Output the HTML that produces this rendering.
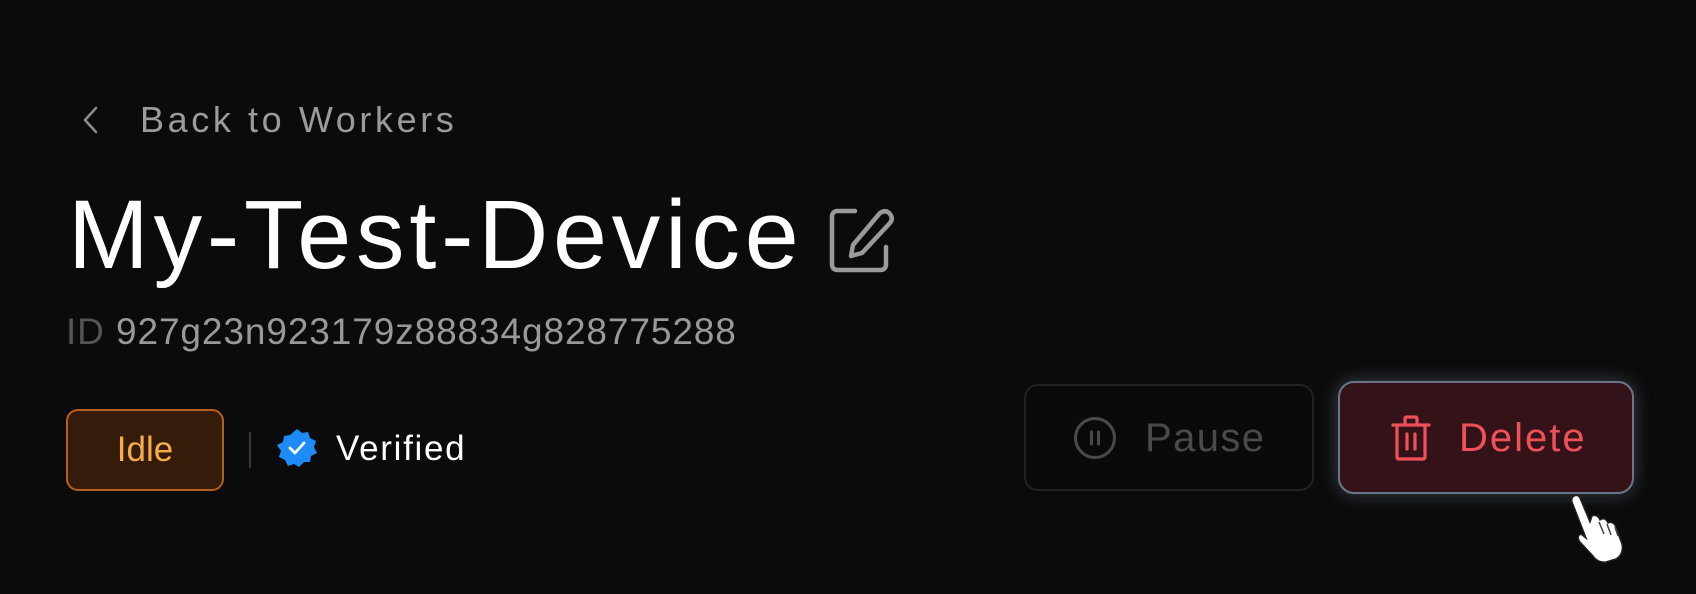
<!DOCTYPE html>
<html><head><meta charset="utf-8"><style>
html,body{margin:0;padding:0;background:#0b0b0b;width:1696px;height:594px;overflow:hidden;font-family:"Liberation Sans",sans-serif;}
.a{position:absolute;white-space:nowrap;}
</style></head><body>
<svg class="a" style="left:78px;top:104px" width="26" height="32" viewBox="0 0 26 32"><path d="M18 4 L7 16 L18 28" fill="none" stroke="#8a8a8a" stroke-width="2.6" stroke-linecap="round" stroke-linejoin="round"/></svg>
<div class="a" style="left:140px;top:98px;font-size:36px;color:#9b9b9b;line-height:44px;letter-spacing:3.6px">Back to Workers</div>
<div class="a" style="left:68px;top:180px;font-size:97px;color:#fff;line-height:110px;letter-spacing:4.8px">My-Test-Device</div>
<svg class="a" style="left:826px;top:204px" width="70" height="70" viewBox="0 0 70 70"><path d="M29 7 H12 Q6 7 6 13 V60 Q6 66 12 66 H54 Q60 66 60 60 V43" fill="none" stroke="#9a9a9a" stroke-width="4.5" stroke-linecap="round"/><path d="M54 9 Q60 5 64 10 Q68 15 63 20 L36 49 L25 52 L27 41 Z" fill="none" stroke="#9a9a9a" stroke-width="4.5" stroke-linejoin="round"/></svg>
<div class="a" style="left:66px;top:310px;font-size:37px;line-height:44px;color:#999;letter-spacing:0.9px"><span style="color:#555">ID</span> 927g23n923179z88834g828775288</div>
<div class="a" style="left:66px;top:409px;width:154px;height:78px;border:2px solid #b85e1c;border-radius:12px;background:#351c0a;color:#f6ad45;font-size:35px;line-height:78px;text-align:center">Idle</div>
<div class="a" style="left:249px;top:432px;width:2px;height:36px;background:#3a3a3a"></div>
<svg class="a" style="left:276px;top:427px" width="42" height="42" viewBox="0 0 42 42"><path d="M21 2 L26 6 L32 5 L34 11 L40 14 L38 20 L41 26 L35 29 L34 35 L28 35 L23 40 L18 37 L12 39 L9 33 L3 30 L5 24 L1 18 L7 15 L8 9 L14 8 Z" fill="#1d8cf8"/><path d="M14 21 L19 26 L28 16" fill="none" stroke="#fff" stroke-width="2.8" stroke-linecap="round" stroke-linejoin="round"/></svg>
<div class="a" style="left:336px;top:427px;font-size:35px;line-height:44px;color:#fff;letter-spacing:1.7px">Verified</div>
<div class="a" style="left:1024px;top:384px;width:286px;height:103px;border:2px solid #222;border-radius:14px;background:#0a0a0a"></div>
<svg class="a" style="left:1073px;top:416px" width="44" height="44" viewBox="0 0 44 44"><circle cx="22" cy="22" r="19.5" fill="none" stroke="#4a4a4a" stroke-width="3"/><path d="M18.5 16 V28 M25.5 16 V28" stroke="#4a4a4a" stroke-width="3" stroke-linecap="round"/></svg>
<div class="a" style="left:1145px;top:414px;font-size:40px;line-height:48px;color:#4a4a4a;letter-spacing:1.4px">Pause</div>
<div class="a" style="left:1338px;top:381px;width:292px;height:109px;border:2px solid #6a7688;border-radius:16px;background:#341318;box-shadow:0 0 18px rgba(150,170,200,0.35)"></div>
<svg class="a" style="left:1390px;top:414px" width="42" height="48" viewBox="0 0 42 48"><path d="M3 11 H39 M15 11 V5 Q15 3 17 3 H25 Q27 3 27 5 V11 M7 11 V43 Q7 45 9 45 H33 Q35 45 35 43 V11 M17 20 V35 M25 20 V35" fill="none" stroke="#f0505a" stroke-width="3.2" stroke-linecap="round" stroke-linejoin="round"/></svg>
<div class="a" style="left:1459px;top:414px;font-size:40px;line-height:48px;color:#f0505a;letter-spacing:2px">Delete</div>
<svg class="a" style="left:1566px;top:492px" width="72" height="72" viewBox="0 0 72 72"><path d="M8 4 Q12 2 14 6 L24 30 L26 24 Q30 22 33 26 L34 28 Q38 25 41 29 L42 31 Q46 29 49 33 L56 52 Q58 62 50 67 L40 70 Q32 71 27 64 L14 50 Q10 44 15 42 L20 46 L6 10 Q5 6 8 4 Z" fill="#fff" stroke="#222" stroke-width="1.5"/><path d="M33 30 L38 42 M41 32 L45 43 M49 35 L52 44" stroke="#444" stroke-width="1.5"/></svg>
</body></html>
